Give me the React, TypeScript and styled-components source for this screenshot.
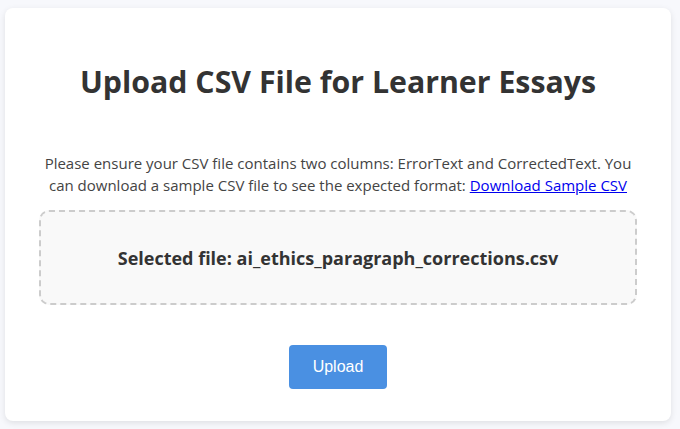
import styled, {createGlobalStyle} from "styled-components";

const GlobalStyle = createGlobalStyle`
  html, body {
    margin: 0;
    background: #f7f8fc;
  }
  body {
    padding: 8px 9px 8px 5px;
    font-family: "Open Sans", "Noto Sans", sans-serif;
  }
`
const Card = styled.div`
  background: #fff;
  border-radius: 8px;
  box-shadow: 0 2px 6px rgba(0, 0, 0, 0.1);
  padding: 32px 34px 32px;
  text-align: center;
`
const Title = styled.h1`
  margin: 23px 0 51px;
  font-size: 30.3px;
  line-height: 38px;
  font-weight: 700;
  color: #333;
`
const Hint = styled.p`
  margin: 0 0 14px;
  font-size: 15px;
  line-height: 22px;
  color: #444;

  a {
    color: #0000ee;
    text-decoration: underline;
  }
`
const DropZone = styled.div`
  border: 2px dashed #ccc;
  border-radius: 10px;
  background: #f9f9f9;
  height: 91px;
  display: flex;
  align-items: center;
  justify-content: center;
`
const FileName = styled.p`
  margin: 0;
  font-size: 18px;
  font-weight: 700;
  color: #333;
`
const UploadButton = styled.button`
  margin-top: 40px;
  width: 98px;
  height: 44px;
  border: none;
  border-radius: 4px;
  background: #4a90e2;
  color: #fff;
  font-family: "Liberation Sans", Arial, sans-serif;
  font-size: 16px;
  cursor: pointer;
`

const App = () => {
    return (
        <>
            <GlobalStyle/>
            <Card>
                <Title>Upload CSV File for Learner Essays</Title>
                <Hint>
                    Please ensure your CSV file contains two columns: ErrorText and CorrectedText. You
                    can download a sample CSV file to see the expected format: <a href="#">Download Sample CSV</a>
                </Hint>
                <DropZone>
                    <FileName>Selected file: ai_ethics_paragraph_corrections.csv</FileName>
                </DropZone>
                <UploadButton>Upload</UploadButton>
            </Card>
        </>
    )
}

export default App
